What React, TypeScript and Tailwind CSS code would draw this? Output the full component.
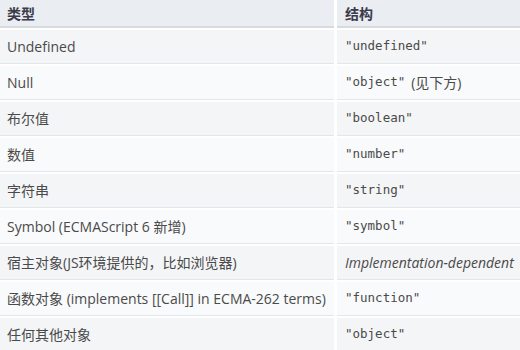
const rows: { type: string; result: string; kind?: "mono" | "italic" }[] = [
  { type: "Undefined", result: '"undefined"' },
  { type: "Null", result: '"object"' },
  { type: "布尔值", result: '"boolean"' },
  { type: "数值", result: '"number"' },
  { type: "字符串", result: '"string"' },
  { type: "Symbol (ECMAScript 6 新增)", result: '"symbol"' },
  { type: "宿主对象(JS环境提供的，比如浏览器)", result: "Implementation-dependent", kind: "italic" },
  { type: "函数对象 (implements [[Call]] in ECMA-262 terms)", result: '"function"' },
  { type: "任何其他对象", result: '"object"' },
];

const sans = "font-['Open_Sans','Noto_Sans_CJK_SC',sans-serif]";
const mono = "font-['DejaVu_Sans_Mono',monospace] text-[12.5px]";

export default function App() {
  return (
    <div className={`w-[520px] h-[350px] overflow-hidden bg-white text-[14px] text-[#4a4a4a] ${sans}`}>
      <div className="grid grid-cols-[334px_1fr] gap-x-[3px] gap-y-[2px] w-[540px]">
        <div className="h-[28px] bg-[#eaedf1] border-b-2 border-[#d7dbe0] px-[7px] flex items-center font-bold text-[#3b3b4b]">
          类型
        </div>
        <div className="h-[28px] bg-[#eaedf1] border-b-2 border-[#d7dbe0] px-[8px] flex items-center font-bold text-[#3b3b4b]">
          结构
        </div>
        {rows.map((r, i) => {
          const bg = i % 2 === 0 ? "bg-[#f4f5f7]" : "bg-[#f9fafb]";
          return [
            <div
              key={`t${i}`}
              className={`h-[34px] ${bg} border-b border-[#e3e6ea] px-[7px] flex items-center whitespace-nowrap`}
            >
              {r.type}
            </div>,
            <div
              key={`r${i}`}
              className={`h-[34px] ${bg} border-b border-[#e3e6ea] px-[8px] flex items-center whitespace-nowrap`}
            >
              {r.kind === "italic" ? (
                <span className="italic">{r.result}</span>
              ) : (
                <>
                  <span className={mono}>{r.result}</span>
                  {i === 1 && <span className="ml-[6px]">(见下方)</span>}
                </>
              )}
            </div>,
          ];
        })}
      </div>
    </div>
  );
}
